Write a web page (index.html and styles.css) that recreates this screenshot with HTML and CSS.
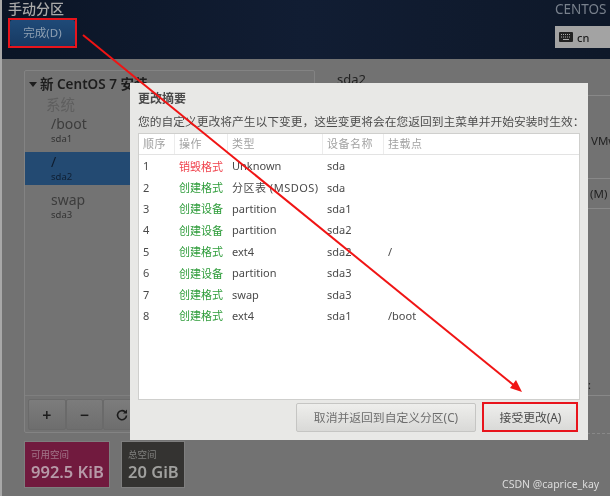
FILE: index.html
```html
<!DOCTYPE html>
<html lang="zh-CN">
<head>
<meta charset="utf-8">
<title>手动分区</title>
<link rel="stylesheet" href="styles.css">
</head>
<body>
<div class="screen">
  <header class="topbar">
    <div class="topbar-left">
      <h1 class="page-title">手动分区</h1>
      <button class="done-btn">完成(D)</button>
    </div>
    <div class="topbar-right">
      <div class="product">CENTOS</div>
      <div class="kbd">
        <svg class="kbd-icon" width="14" height="10" viewBox="0 0 14 10"><rect x="0" y="0" width="14" height="10" rx="1" fill="#222"/><path d="M2 2.5h10M2 5h10" stroke="#aaa" stroke-width="1" stroke-dasharray="1 1"/><path d="M4 7.5h6" stroke="#aaa" stroke-width="1"/></svg>
        <span>cn</span>
      </div>
    </div>
  </header>

  <main class="content">
    <section class="left-col">
      <div class="panel">
        <div class="panel-head"><span class="caret"></span>新 CentOS 7 安装</div>
        <div class="group">系统</div>
        <div class="mount"><div class="mount-name">/boot</div><div class="mount-dev">sda1</div></div>
        <div class="mount selected"><div class="mount-name">/</div><div class="mount-dev">sda2</div></div>
        <div class="mount"><div class="mount-name">swap</div><div class="mount-dev">sda3</div></div>
        <div class="panel-spacer"></div>
        <div class="toolbar">
          <div class="tool">+</div>
          <div class="tool">−</div>
          <div class="tool">
            <svg width="14" height="14" viewBox="0 0 14 14"><path d="M11.5 7.5a4.5 4.5 0 1 1-1.4-3.6" fill="none" stroke="#1c1c1c" stroke-width="1.6"/><path d="M12 1.5v4h-4z" fill="#1c1c1c"/></svg>
          </div>
        </div>
      </div>
      <div class="tiles">
        <div class="tile tile-free"><div class="tile-label">可用空间</div><div class="tile-value">992.5 KiB</div></div>
        <div class="tile tile-total"><div class="tile-label">总空间</div><div class="tile-value">20 GiB</div></div>
      </div>
    </section>
    <section class="right-col">
      <div class="detail-title">sda2</div>
      <div class="rule rule-1"></div>
      <div class="detail-vm">VMw</div>
      <div class="rule rule-2"></div>
      <div class="detail-m">(M)</div>
      <div class="rule rule-3"></div>
      <div class="detail-colon">:</div>
      <div class="rule rule-4"></div>
      <div class="rule rule-5"></div>
    </section>
  </main>

  <div class="dialog">
    <h2 class="dialog-title">更改摘要</h2>
    <p class="dialog-desc">您的自定义更改将产生以下变更，这些变更将会在您返回到主菜单并开始安装时生效：</p>
    <div class="table">
      <div class="row head"><div>顺序</div><div>操作</div><div>类型</div><div>设备名称</div><div>挂载点</div></div>
      <div class="row"><div>1</div><div class="destroy">销毁格式</div><div>Unknown</div><div>sda</div><div></div></div>
      <div class="row"><div>2</div><div class="create">创建格式</div><div class="wide">分区表 (MSDOS)</div><div>sda</div><div></div></div>
      <div class="row"><div>3</div><div class="create">创建设备</div><div>partition</div><div>sda1</div><div></div></div>
      <div class="row"><div>4</div><div class="create">创建设备</div><div>partition</div><div>sda2</div><div></div></div>
      <div class="row"><div>5</div><div class="create">创建格式</div><div>ext4</div><div>sda2</div><div>/</div></div>
      <div class="row"><div>6</div><div class="create">创建设备</div><div>partition</div><div>sda3</div><div></div></div>
      <div class="row"><div>7</div><div class="create">创建格式</div><div>swap</div><div>sda3</div><div></div></div>
      <div class="row"><div>8</div><div class="create">创建格式</div><div>ext4</div><div>sda1</div><div>/boot</div></div>
    </div>
    <div class="dialog-actions">
      <button class="dlg-btn btn-cancel">取消并返回到自定义分区(C)</button>
      <button class="dlg-btn btn-accept">接受更改(A)</button>
    </div>
  </div>

  <div class="mark mark-done"></div>
  <div class="mark mark-accept"></div>
  <svg class="arrow" width="610" height="496" viewBox="0 0 610 496">
    <line x1="83" y1="35" x2="516" y2="387" stroke="#f01414" stroke-width="2"/>
    <path d="M522 392 L510 388 L516 380 Z" fill="#f01414"/>
  </svg>
  <div class="watermark">CSDN @caprice_kay</div>
</div>
</body>
</html>
```
FILE: styles.css
```css
* { box-sizing: border-box; }
html, body { margin: 0; padding: 0; background: #727272; }
body { font-family: "Noto Sans", "Noto Sans CJK SC", sans-serif; }
.screen {
  position: relative;
  width: 610px;
  height: 496px;
  overflow: hidden;
  background: #727272;
  border-left: 2px solid #a8a8a8;
  filter: blur(0.45px);
}
.topbar {
  height: 59px;
  margin-left: -2px;
  padding: 0 0 0 8px;
  display: flex;
  justify-content: space-between;
  background: linear-gradient(90deg, #0b1526, #111d33 50%, #0e1829);
}
.page-title {
  margin: 0;
  height: 18px;
  font-size: 14px;
  line-height: 18px;
  font-weight: 500;
  color: #a9a9a9;
}
.done-btn {
  display: block;
  margin: 2px 0 0 2px;
  width: 65px;
  height: 26px;
  padding: 0;
  border: 0;
  border-radius: 2px;
  background: linear-gradient(#1f4a78, #173a63);
  color: #8fa0b2;
  font: 11.5px/26px "Noto Sans", "Noto Sans CJK SC", sans-serif;
}
.topbar-right { width: 55px; overflow: hidden; }
.product { height: 26px; font-size: 13.5px; line-height: 18px; color: #78808c; white-space: nowrap; }
.kbd {
  height: 22px;
  display: flex;
  align-items: center;
  gap: 4px;
  padding-left: 4px;
  background: #a3a3a3;
  font-size: 11px;
  font-weight: 500;
  color: #1c1c1c;
}
.content { display: flex; padding: 11px 0 0 22px; height: 437px; }
.left-col { width: 291px; flex: none; }
.panel {
  height: 363px;
  display: flex;
  flex-direction: column;
  border: 1px solid #838383;
  border-radius: 2px;
  background: #737373;
}
.panel-head { height: 26px; padding: 0 0 0 4px; font-size: 13.5px; font-weight: 600; color: #1d1d1d; display: flex; align-items: center; line-height: 20px; white-space: nowrap; }
.caret {
  width: 0; height: 0;
  margin: 0 3px 0 0;
  border-left: 4px solid transparent;
  border-right: 4px solid transparent;
  border-top: 5px solid #1d1d1d;
}
.group { height: 14px; padding-left: 21px; font-size: 14.5px; line-height: 14px; color: #5f5f5f; }
.mount { height: 33px; padding-left: 26px; color: #3c3c3c; }
.group + .mount { height: 41px; padding-top: 3px; }
.mount-name { font-size: 14px; line-height: 19px; }
.mount-dev { font-size: 9.5px; line-height: 12px; color: #333; }
.selected { background: #234a72; color: #0e1b2c; }
.selected .mount-dev { color: #0f1f33; }
.mount.selected + .mount { padding-top: 5px; height: 38px; }
.panel-spacer { flex: 1; }
.toolbar {
  height: 37px;
  display: flex;
  padding: 3px;
  border-top: 1px solid #7f7f7f;
}
.tool {
  width: 37.5px;
  height: 31px;
  display: flex;
  align-items: center;
  justify-content: center;
  border: 1px solid #6a6a6a;
  border-radius: 2px;
  background: linear-gradient(#7c7c7c, #6e6e6e);
  font-size: 16px;
  font-weight: 600;
  color: #1c1c1c;
}
.tiles { display: flex; gap: 11px; margin-top: 8px; }
.tile { height: 47px; padding: 7px 6px 0; border: 1px solid #7e7e7e; }
.tile-free { width: 86px; background: #711a3e; color: #b79aa8; }
.tile-total { width: 64px; background: #343331; color: #a0a09e; }
.tile-label { font-size: 9.5px; line-height: 12px; opacity: 0.7; }
.tile-value { font-size: 16.5px; line-height: 21px; font-weight: 600; white-space: nowrap; }
.right-col { flex: 1; padding: 0 0 0 22px; position: relative; color: #2c2c2c; }
.detail-title { font-size: 13px; line-height: 18px; color: #222; }
.detail-vm { position: absolute; left: 276px; top: 63px; font-size: 11.5px; line-height: 16px; color: #222; white-space: nowrap; }
.detail-m { position: absolute; left: 275px; top: 116px; font-size: 11.5px; line-height: 16px; color: #222; }
.detail-colon { position: absolute; left: 273px; top: 307px; font-size: 11px; line-height: 16px; color: #222; }
.rule { position: absolute; left: 22px; right: 0; border-top: 1px solid #888; }
.rule-1 { top: 25px; }
.rule-2 { top: 108px; }
.rule-3 { top: 138px; }
.rule-4 { top: 325px; }
.rule-5 { top: 363px; border-top-style: dashed; }

.dialog {
  position: absolute;
  left: 128px;
  top: 83px;
  width: 458px;
  height: 357px;
  padding: 8px 8px 0;
  background: #e8e8e6;
  display: flex;
  flex-direction: column;
}
.dialog-title { margin: 0; font-size: 12px; line-height: 16px; font-weight: 600; color: #4a4a4a; }
.dialog-desc { margin: 6px 0 0; height: 20px; font-size: 11.75px; line-height: 17px; color: #4c4c4c; white-space: nowrap; }
.table {
  width: 442px;
  height: 267px;
  flex: none;
  background: #fff;
  border: 1px solid #cfcfcd;
}
.row {
  display: grid;
  grid-template-columns: 36px 53px 95px 61px 1fr;
  height: 21.4px;
  align-items: center;
  font-size: 11px;
  color: #4a4a4a;
  white-space: nowrap;
}
.row > div { padding-left: 4px; }
.row.head { height: 21px; border-bottom: 1px solid #e3e3e3; color: #a2a2a2; }
.row.head > div { height: 20px; line-height: 20px; border-right: 1px solid #ececec; letter-spacing: 0.5px; }
.row.head > div:last-child { border-right: 0; }
.destroy { color: #f0434d; }
.create { color: #2e9c3a; }
.wide { letter-spacing: 0.5px; }
.dialog-actions { display: flex; justify-content: flex-end; gap: 7px; margin-top: 3px; padding-right: 2px; }
.dlg-btn {
  height: 29px;
  padding: 0;
  border: 1px solid #c5c5c3;
  border-radius: 2px;
  background: linear-gradient(#eeeeec, #d9d9d7);
  color: #5a5a5a;
  font: 11.8px/27px "Noto Sans", "Noto Sans CJK SC", sans-serif;
  white-space: nowrap;
}
.btn-cancel { width: 180px; color: #6d6d6d; }
.btn-accept { width: 95px; color: #4a4a4a; }

.mark { position: absolute; border: 2px solid #e8141c; }
.mark-done { left: 6px; top: 18px; width: 69px; height: 30px; }
.mark-accept { left: 480px; top: 402px; width: 96px; height: 30px; }
.arrow { position: absolute; left: -2px; top: 0; }
.watermark {
  position: absolute;
  left: 500px;
  top: 476px;
  font-size: 10.5px;
  line-height: 16px;
  color: #dcdcdc;
  white-space: nowrap;
}
```
